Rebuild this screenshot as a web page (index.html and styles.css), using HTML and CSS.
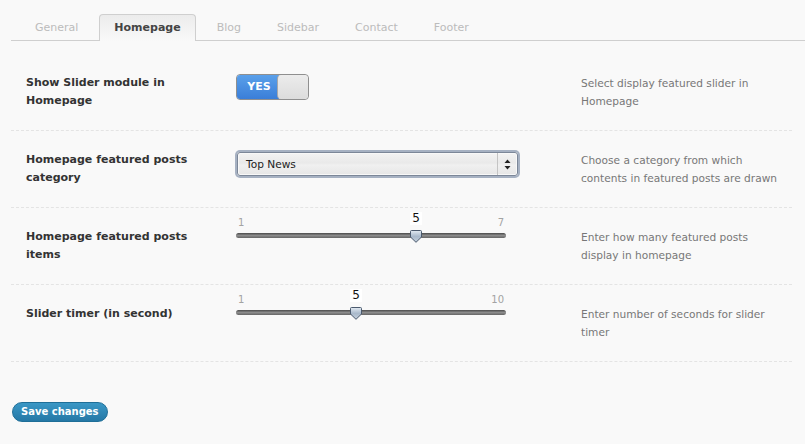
FILE: index.html
```html
<!DOCTYPE html>
<html>
<head>
<meta charset="utf-8">
<link rel="stylesheet" href="styles.css">
</head>
<body>
<div class="page">
  <ul class="tabs">
    <li class="tab">General</li>
    <li class="tab active">Homepage</li>
    <li class="tab">Blog</li>
    <li class="tab">Sidebar</li>
    <li class="tab">Contact</li>
    <li class="tab">Footer</li>
  </ul>

  <div class="rows">
    <div class="row">
      <div class="label">Show Slider module in Homepage</div>
      <div class="control">
        <div class="toggle"><span class="toggle-on">YES</span><span class="toggle-knob"></span></div>
      </div>
      <div class="desc">Select display featured slider in Homepage</div>
    </div>

    <div class="row">
      <div class="label">Homepage featured posts category</div>
      <div class="control">
        <div class="select">
          <span class="select-text">Top News</span>
          <span class="select-arrows">
            <svg width="7" height="11" viewBox="0 0 7 11"><path d="M3.5 0.5 L6.5 4 L0.5 4 Z" fill="#222"/><path d="M0.5 7 L6.5 7 L3.5 10.5 Z" fill="#222"/></svg>
          </span>
        </div>
      </div>
      <div class="desc">Choose a category from which contents in featured posts are drawn</div>
    </div>

    <div class="row">
      <div class="label">Homepage featured posts items</div>
      <div class="control">
        <div class="slider">
          <div class="slider-scale"><span>1</span><span>7</span></div>
          <div class="slider-track">
            <div class="slider-handle" style="left: 66.667%">
              <span class="slider-value">5</span>
              <svg class="thumb" width="12" height="13" viewBox="0 0 12 13"><defs><linearGradient id="tg1" x1="0" y1="0" x2="0" y2="1"><stop offset="0" stop-color="#e3ebf3"/><stop offset="0.5" stop-color="#a9b9cb"/><stop offset="1" stop-color="#c4d0dd"/></linearGradient></defs><path d="M1.5 0.5 H10.5 Q11.5 0.5 11.5 1.5 V7 L6 12.3 L0.5 7 V1.5 Q0.5 0.5 1.5 0.5 Z" fill="url(#tg1)" stroke="#4b5a6e" stroke-width="1"/></svg>
            </div>
          </div>
        </div>
      </div>
      <div class="desc">Enter how many featured posts display in homepage</div>
    </div>

    <div class="row">
      <div class="label">Slider timer (in second)</div>
      <div class="control">
        <div class="slider">
          <div class="slider-scale"><span>1</span><span>10</span></div>
          <div class="slider-track">
            <div class="slider-handle" style="left: 44.444%">
              <span class="slider-value">5</span>
              <svg class="thumb" width="12" height="13" viewBox="0 0 12 13"><defs><linearGradient id="tg2" x1="0" y1="0" x2="0" y2="1"><stop offset="0" stop-color="#e3ebf3"/><stop offset="0.5" stop-color="#a9b9cb"/><stop offset="1" stop-color="#c4d0dd"/></linearGradient></defs><path d="M1.5 0.5 H10.5 Q11.5 0.5 11.5 1.5 V7 L6 12.3 L0.5 7 V1.5 Q0.5 0.5 1.5 0.5 Z" fill="url(#tg2)" stroke="#4b5a6e" stroke-width="1"/></svg>
            </div>
          </div>
        </div>
      </div>
      <div class="desc">Enter number of seconds for slider timer</div>
    </div>
  </div>

  <div class="actions">
    <button class="save">Save changes</button>
  </div>
</div>
</body>
</html>
```

FILE: styles.css
```css
html, body {
  margin: 0;
  padding: 0;
  background: #f9f9f9;
}
body {
  font-family: "DejaVu Sans", Verdana, sans-serif;
  color: #333;
}
.page {
  padding: 14px 0 0 11px;
}
.tabs {
  list-style: none;
  margin: 0;
  padding: 0 0 0 9px;
  display: flex;
  border-bottom: 1px solid #cfcfcf;
}
.tab {
  height: 25px;
  line-height: 25px;
  padding: 0 14px;
  margin-right: 6px;
  font-size: 11px;
  color: #bcbcbc;
  border: 1px solid transparent;
  border-bottom: none;
  margin-bottom: -1px;
  border-radius: 4px 4px 0 0;
}
.tab.active {
  color: #444;
  font-weight: bold;
  border-color: #cfcfcf;
  height: 26px;
  background: linear-gradient(#ececec, #f9f9f9);
}
.rows {
  margin-top: 13px;
  margin-right: 13px;
}
.row {
  display: grid;
  grid-template-columns: 210px 345px 1fr;
  padding: 20px 0 20px 15px;
  border-bottom: 1px dashed #e4e4e4;
  min-height: 36px;
}
.label {
  font-size: 11px;
  font-weight: bold;
  line-height: 18px;
  color: #333;
  padding-right: 25px;
}
.desc {
  font-size: 10.6px;
  line-height: 18px;
  color: #777;
  padding-right: 10px;
}
.control {
  position: relative;
}
/* toggle */
.toggle {
  width: 71px;
  height: 24px;
  border: 1px solid #8f8f8f;
  border-radius: 4px;
  display: flex;
  overflow: hidden;
  box-sizing: content-box;
}
.toggle-on {
  width: 42px;
  background: linear-gradient(#5aa0ea, #3a7ed8);
  color: #fff;
  font-size: 11px;
  font-weight: bold;
  line-height: 24px;
  text-align: center;
  padding-left: 2px;
  box-sizing: border-box;
}
.toggle-knob {
  flex: 1;
  background: linear-gradient(#ececec, #dcdcdc);
  border-left: 1px solid #a8a8a8;
  border-radius: 4px;
  margin-left: -2px;
}
/* select */
.select {
  width: 279px;
  height: 22px;
  margin-top: -1px;
  margin-left: -1px;
  border: 1px solid #7c8798;
  border-radius: 3px;
  box-shadow: 0 0 0 2px #a6b1c2, inset 0 0 0 1px #f8f8f8;
  background: linear-gradient(#f3f3f3 0%, #e9e9e9 45%, #f0f0f0 55%, #e6e6e6 100%);
  display: flex;
  align-items: center;
  position: relative;
  top: 2px;
  left: 2px;
}
.select-text {
  flex: 1;
  font-size: 10.6px;
  color: #222;
  padding-left: 8px;
}
.select-arrows {
  width: 19px;
  height: 22px;
  border-left: 1px solid #c4c4c4;
  display: flex;
  align-items: center;
  justify-content: center;
}
/* slider */
.slider {
  width: 270px;
  margin-top: -12px;
}
.slider-scale {
  display: flex;
  justify-content: space-between;
  font-size: 10px;
  color: #a3a3a3;
  height: 14px;
  line-height: 14px;
  padding: 0 2px 0 2px;
}
.slider-track {
  position: relative;
  margin-top: 3px;
  height: 5px;
  border-radius: 3px;
  background: linear-gradient(#4a4a4a, #8c8c8c 50%, #666);
}
.slider-handle {
  position: absolute;
  top: -3px;
  width: 0;
  height: 0;
}
.slider-handle .thumb {
  position: absolute;
  left: -6px;
  top: 0;
}
.slider-value {
  position: absolute;
  left: -6px;
  top: -18px;
  width: 12px;
  height: 13px;
  line-height: 13px;
  background: #fff;
  color: #111;
  font-size: 12px;
  text-align: center;
}
/* actions */
.actions {
  padding-top: 38px;
}
.save {
  font-family: "DejaVu Sans", Verdana, sans-serif;
  font-size: 10px;
  font-weight: bold;
  color: #fff;
  height: 20px;
  padding: 0 8px;
  margin-left: 1px;
  border: 1px solid #1f6f98;
  border-radius: 10px;
  background: linear-gradient(#3a97c5, #2578a6);
  line-height: 18px;
}
```
